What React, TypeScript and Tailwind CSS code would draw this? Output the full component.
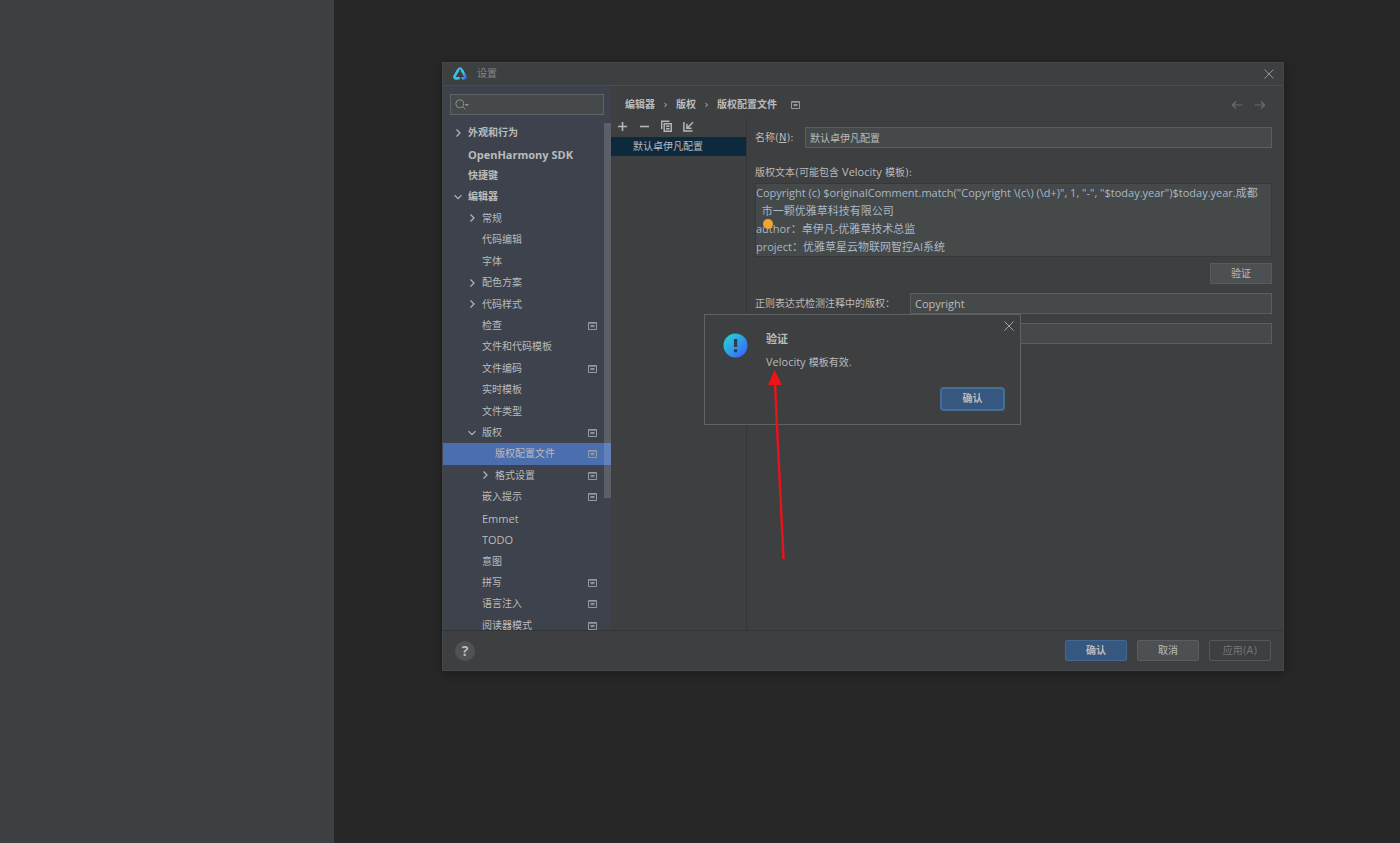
import { useState } from "react"
import clsx from "clsx"

type TreeItem = {
  label: string
  level: number
  arrow?: "open" | "closed"
  project?: boolean
  latin?: boolean
}

const items: TreeItem[] = [
  { label: "外观和行为", level: 0, arrow: "closed" },
  { label: "OpenHarmony SDK", level: 0, latin: true },
  { label: "快捷键", level: 0 },
  { label: "编辑器", level: 0, arrow: "open" },
  { label: "常规", level: 1, arrow: "closed" },
  { label: "代码编辑", level: 1 },
  { label: "字体", level: 1 },
  { label: "配色方案", level: 1, arrow: "closed" },
  { label: "代码样式", level: 1, arrow: "closed" },
  { label: "检查", level: 1, project: true },
  { label: "文件和代码模板", level: 1 },
  { label: "文件编码", level: 1, project: true },
  { label: "实时模板", level: 1 },
  { label: "文件类型", level: 1 },
  { label: "版权", level: 1, arrow: "open", project: true },
  { label: "版权配置文件", level: 2, project: true },
  { label: "格式设置", level: 2, arrow: "closed", project: true },
  { label: "嵌入提示", level: 1, project: true },
  { label: "Emmet", level: 1, latin: true },
  { label: "TODO", level: 1, latin: true },
  { label: "意图", level: 1 },
  { label: "拼写", level: 1, project: true },
  { label: "语言注入", level: 1, project: true },
  { label: "阅读器模式", level: 1, project: true },
]

const indents = ["pl-[10px]", "pl-6", "pl-[37px]"]

const template = [
  'Copyright (c) $originalComment.match("Copyright \\(c\\) (\\d+)", 1, "-", "$today.year")$today.year.成都',
  "\u00a0\u00a0市一颗优雅草科技有限公司",
  "author：卓伊凡-优雅草技术总监",
  "project：优雅草星云物联网智控AI系统",
].join("\n")

const Chevron = ({ open }: { open?: boolean }) => (
  <svg width="11" height="11" viewBox="0 0 11 11" fill="none" stroke="#b4b8be" strokeWidth="1.2">
    <path d={open ? "M1.5 3.2 5 6.7 8.5 3.2" : "M3.5 1.5 7 5 3.5 8.5"} />
  </svg>
)

const ProjectIcon = () => (
  <svg width="9" height="8" viewBox="0 0 9 8" fill="none" stroke="#959a9f">
    <path d="M0.5 0.5H8.5V7.5H0.5ZM0.5 1.2H8.5M2.5 3.5H6.5M2.5 4.7H6.5" />
  </svg>
)

const CloseIcon = () => (
  <svg width="10" height="10" viewBox="0 0 10 10" stroke="currentColor" strokeWidth="1">
    <path d="M0.5 0.5 9.5 9.5M9.5 0.5 0.5 9.5" />
  </svg>
)

const Logo = () => (
  <svg width="14" height="13" viewBox="0 0 14 13" fill="none" strokeLinejoin="round" strokeLinecap="round">
    <defs>
      <linearGradient id="logo" x1="0" y1="0" x2="1" y2="1">
        <stop offset="0.2" stopColor="#35c9e6" />
        <stop offset="1" stopColor="#3a62e0" />
      </linearGradient>
    </defs>
    <path d="M5.4 2.6C6.2 1 7.6 0.9 8.5 2.3L9.8 4.6" stroke="#35bfe8" strokeWidth="2" />
    <path d="M9.4 4.2 12.2 9C13 10.6 12.2 11.4 10.8 11.4L9.6 11.2" stroke="url(#logo)" strokeWidth="2.6" />
    <path d="M5.2 3 1.8 8.8C0.9 10.6 1.8 11.4 3.2 11.4L5.8 11.2" stroke="#35c4e8" strokeWidth="2.6" />
  </svg>
)

const Sidebar = () => {
  const [active, setActive] = useState("版权配置文件")

  return (
    <aside className="flex w-[168px] shrink-0 flex-col bg-[#3d424d]">
      <label className="mx-[7px] mt-2 flex h-[21px] items-center border border-[#5f6366] bg-[#45494a] pl-1">
        <svg width="16" height="14" viewBox="0 0 16 14" fill="none" stroke="#8b8f93">
          <circle cx="4.8" cy="5.8" r="4" />
          <path d="M7.7 8.7 10.5 11.5" />
          <path d="M9.5 6H14L11.7 8.3Z" fill="#8b8f93" stroke="none" />
        </svg>
        <input aria-label="搜索设置" className="min-w-0 flex-1 bg-transparent outline-none" />
      </label>
      <div className="mt-[7px] flex h-[508px] overflow-hidden">
        <ul className="grid h-[514px] flex-1 auto-rows-fr">
          {items.map(({ label, level, arrow, project, latin }) => (
            <li key={label} className={clsx(active === label && "bg-[#4b6eaf]")}>
              <button
                onClick={() => setActive(label)}
                className={clsx("flex h-full w-full items-center pt-px pr-[7px] text-left", indents[level], level === 0 && "font-bold")}
              >
                <span className="w-[15px]">{arrow && <Chevron open={arrow === "open"} />}</span>
                <span className={clsx("flex-1 whitespace-nowrap", latin && "font-['Open_Sans',sans-serif] text-[11px]")}>{label}</span>
                {project && <ProjectIcon />}
              </button>
            </li>
          ))}
        </ul>
        <div className="flex w-[7px] flex-col">
          <div className="mt-px h-80 bg-[#5b5f67]" />
          <div className="h-[22px] bg-[#6280b9]" />
          <div className="h-[33px] bg-[#5b5f67]" />
        </div>
      </div>
    </aside>
  )
}

const Profiles = () => (
  <div className="flex w-[136px] shrink-0 flex-col border-r border-[#343638]">
    <div className="flex h-5 items-center gap-[9px] pb-px pl-[5px] text-[#b4b7b9]">
      <button aria-label="添加">
        <svg width="13" height="13" viewBox="0 0 13 13" stroke="currentColor" strokeWidth="1.6">
          <path d="M6.5 2V11M2 6.5H11" />
        </svg>
      </button>
      <button aria-label="移除">
        <svg width="13" height="13" viewBox="0 0 13 13" stroke="currentColor" strokeWidth="1.6">
          <path d="M2 6.5H11" />
        </svg>
      </button>
      <button aria-label="复制">
        <svg width="13" height="13" viewBox="0 0 13 13" fill="none" stroke="currentColor" strokeWidth="1.4">
          <path d="M1.7 9V1.2H9.5" />
          <path d="M4.2 3.7H11.3V11.3H4.2ZM6 6.2H9.6M6 8.7H9.6" />
        </svg>
      </button>
      <button aria-label="导入">
        <svg width="13" height="13" viewBox="0 0 13 13" fill="none" stroke="currentColor" strokeWidth="1.5">
          <path d="M1.9 2V10.9H10.5M11 2.2 5.2 8M4.9 3.8V8.2H9.6" />
        </svg>
      </button>
    </div>
    <button className="h-[19px] bg-[#0d293e] pl-[22px] text-left">默认卓伊凡配置</button>
  </div>
)

const fieldStyle = "h-[21px] min-w-0 flex-1 border border-[#5a5e60] bg-[#45494a] px-1 outline-none"

const ProfileForm = () => (
  <div className="flex min-w-0 flex-1 flex-col pt-[10px] pr-[11px] pl-2">
    <div className="flex items-center">
      <label htmlFor="name" className="w-[50px] whitespace-nowrap">名称(<u>N</u>):</label>
      <input id="name" defaultValue="默认卓伊凡配置" className={fieldStyle} />
    </div>
    <label htmlFor="template" className="mt-[17px] h-[14px]">
      版权文本(可能包含 <span className="font-['Open_Sans',sans-serif] text-[11px]">Velocity</span> 模板):
    </label>
    <div className="relative mt-1">
      <textarea
        id="template"
        defaultValue={template}
        spellCheck={false}
        className="block h-[74px] w-full resize-none overflow-hidden border border-[#35393a] bg-[#45494a] font-['Open_Sans','Noto_Sans_CJK_SC',sans-serif] text-[11px] leading-[18px] whitespace-pre text-[#a9b7c6] outline-none"
      />
      <span className="absolute top-9 left-2 size-[10px] rounded-full bg-[#f2a52e]" />
    </div>
    <button className="mt-[6px] h-[21px] w-[62px] self-end border border-[#575b5d] bg-[#4c5052]">验证</button>
    <div className="mt-[9px] flex items-center">
      <label htmlFor="pattern" className="w-[155px] whitespace-nowrap">正则表达式检测注释中的版权：</label>
      <input id="pattern" defaultValue="Copyright" className={clsx(fieldStyle, "font-['Open_Sans',sans-serif] text-[11px]")} />
    </div>
    <div className="mt-[9px] flex pl-[155px]">
      <input aria-label="允许替换版权" className={fieldStyle} />
    </div>
  </div>
)

const ValidationDialog = () => (
  <div role="dialog" aria-labelledby="dialog-title" className="absolute top-[251px] left-[261px] flex h-[111px] w-[317px] flex-col border border-[#606365] bg-[#3d3f41] text-[#bbbbbb]">
    <button aria-label="关闭" className="mt-[6px] mr-[6px] self-end text-[#a0a3a5]">
      <CloseIcon />
    </button>
    <div className="flex gap-[18px] pl-[18px]">
      <svg width="25" height="25" viewBox="0 0 25 25" className="mt-[2px]">
        <defs>
          <linearGradient id="info" x1="0" y1="0" x2="1" y2="1">
            <stop offset="0.1" stopColor="#27cfd5" />
            <stop offset="1" stopColor="#3b5cff" />
          </linearGradient>
        </defs>
        <circle cx="12.5" cy="12.5" r="12" fill="url(#info)" />
        <path d="M11 6H14.2V14H11ZM11 16.3H14.2V19.2H11Z" fill="#303c4c" />
      </svg>
      <div className="pt-px">
        <h2 id="dialog-title" className="text-[11px] leading-4 font-bold">验证</h2>
        <p className="mt-[7px] leading-[14px]">
          <span className="font-['Open_Sans',sans-serif] text-[11px]">Velocity</span> 模板有效.
        </p>
      </div>
    </div>
    <button className="mt-[17px] mr-[15px] h-6 w-[65px] self-end rounded-[4px] border-2 border-[#466d94] bg-[#365880] font-bold">确认</button>
  </div>
)

export default function App() {
  return (
    <div className="flex min-h-screen bg-[#272727] font-['DejaVu_Sans','Noto_Sans_CJK_SC',sans-serif] text-[10px] leading-[14px] text-[#bbbbbb]">
      <div className="w-[334px] shrink-0 bg-[#3e4043]" />
      <main className="flex-1 pt-[62px] pr-[116px] pl-[108px]">
        <div className="relative flex flex-col border border-[#45484a] bg-[#3d3f41] shadow-[0_2px_8px_#1b1b1b]">
          <header className="flex h-[23px] items-center border-b border-[#4a4d4f] pr-[9px] pb-px pl-[10px]">
            <Logo />
            <h1 className="ml-[10px] flex-1 text-[#85888a]">设置</h1>
            <button aria-label="关闭" className="text-[#94979a]">
              <CloseIcon />
            </button>
          </header>
          <div className="flex">
            <Sidebar />
            <div className="flex min-w-0 flex-1 flex-col">
              <nav className="flex h-[31px] items-center pt-[6px] pr-[17px] pl-[14px] font-bold">
                <span>编辑器</span>
                <span className="w-[21px] text-center font-normal">›</span>
                <span>版权</span>
                <span className="w-[21px] text-center font-normal">›</span>
                <span className="mr-[14px]">版权配置文件</span>
                <ProjectIcon />
                <div className="ml-auto flex gap-[11px] text-[#696c6e]">
                  <button aria-label="后退">
                    <svg width="12" height="10" viewBox="0 0 12 10" fill="none" stroke="currentColor" strokeWidth="1.2">
                      <path d="M11.5 5H1.5M5 1.5 1.5 5 5 8.5" />
                    </svg>
                  </button>
                  <button aria-label="前进">
                    <svg width="12" height="10" viewBox="0 0 12 10" fill="none" stroke="currentColor" strokeWidth="1.2">
                      <path d="M0.5 5H10.5M7 1.5 10.5 5 7 8.5" />
                    </svg>
                  </button>
                </div>
              </nav>
              <div className="flex flex-1">
                <Profiles />
                <ProfileForm />
              </div>
            </div>
          </div>
          <footer className="flex h-10 items-center gap-[10px] border-t border-[#333537] pr-3 pl-3">
            <button aria-label="帮助" className="mr-auto size-5 rounded-full bg-[#4f5355] font-['Open_Sans',sans-serif] text-sm leading-5 font-bold">?</button>
            <button className="h-[21px] w-[62px] rounded-[2px] border border-[#43688f] bg-[#365880] font-bold">确认</button>
            <button className="h-[21px] w-[62px] rounded-[2px] border border-[#5a5e60] bg-[#4c5052]">取消</button>
            <button disabled className="h-[21px] w-[62px] rounded-[2px] border border-[#55585a] text-[#74777a]">应用(A)</button>
          </footer>
          <ValidationDialog />
          <svg width="18" height="190" viewBox="0 0 18 190" className="absolute top-[307px] left-[325px]">
            <path d="M7 14 15.5 189" stroke="#e3151d" strokeWidth="2.5" />
            <path d="M6.5 0 14 15H0Z" fill="#ee1219" />
          </svg>
        </div>
      </main>
    </div>
  )
}
